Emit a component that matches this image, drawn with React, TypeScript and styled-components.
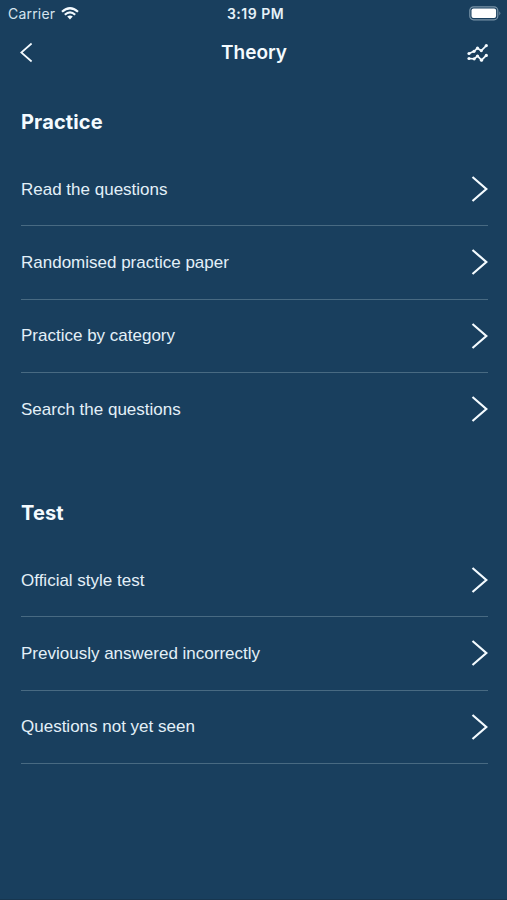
import React from "react";
import styled, { createGlobalStyle } from "styled-components";

const GlobalStyle = createGlobalStyle`
  * { box-sizing: border-box; }
  body { margin: 0; background: #193f5e; }
`;

const Screen = styled.div`
  display: flex;
  flex-direction: column;
  width: 507px;
  height: 900px;
  overflow: hidden;
  background: #193f5e;
  color: #f4fbff;
  font-family: "Liberation Sans", sans-serif;
  border-bottom: 1px solid #17364f;
`;

const StatusBar = styled.div`
  display: grid;
  grid-template-columns: 1fr auto 1fr;
  align-items: center;
  height: 27px;
  padding: 0 6px 0 8px;
  font-family: Inter, sans-serif;
`;

const Carrier = styled.div`
  display: flex;
  align-items: center;
  gap: 6px;
  font-size: 14px;
  letter-spacing: 0.2px;
  color: #d5e4ee;
`;

const Clock = styled.div`
  padding-left: 2px;
  font-size: 14px;
  font-weight: 600;
  letter-spacing: 0.5px;
  color: #e6f1f8;
`;

const BatterySlot = styled.div`
  display: flex;
  justify-content: flex-end;
`;

const NavBar = styled.header`
  display: grid;
  grid-template-columns: 1fr auto 1fr;
  align-items: center;
  height: 51px;
  padding: 0 18px 0 20px;
`;

const NavButton = styled.button<{ $end?: boolean }>`
  display: flex;
  justify-self: ${(p) => (p.$end ? "end" : "start")};
  padding: 0;
  border: 0;
  background: none;
  color: inherit;
`;

const Title = styled.h1`
  margin: 0;
  padding-right: 1px;
  font: 600 19px/24px Inter, sans-serif;
`;

const Section = styled.section`
  height: 391px;
  padding: 30px 19px 0 21px;
`;

const Heading = styled.h2`
  margin: 0 0 17px;
  font: 700 20px/28px Inter, sans-serif;
  letter-spacing: 0.15px;
`;

const List = styled.ul`
  margin: 0;
  padding: 0;
  list-style: none;
`;

const Row = styled.li<{ $line: boolean }>`
  display: flex;
  align-items: center;
  justify-content: space-between;
  height: 73.3px;
  border-bottom: 1px solid ${(p) => (p.$line ? "#486a82" : "transparent")};
`;

const Label = styled.span`
  padding-top: 1px;
  font-size: 17px;
  line-height: 22px;
  color: #e3f0f8;
`;

const WifiIcon = () => (
  <svg width="18" height="13" viewBox="0 0 18 13" fill="none" stroke="#f4fbff" strokeWidth="2.2">
    <path d="M1 4.8Q9-2.3 17 4.8M3.8 7.7Q9 3.1 14.2 7.7" />
    <path d="M6.2 9.6Q9 7.2 11.8 9.6L9 12.6Z" fill="#f4fbff" stroke="none" />
  </svg>
);

const BatteryIcon = () => (
  <svg width="32" height="15" viewBox="0 0 32 15" fill="none">
    <rect x="0.8" y="0.8" width="28" height="13" rx="3.8" stroke="#7994a8" strokeWidth="1.2" />
    <rect x="2.5" y="2.5" width="24.6" height="9.6" rx="2" fill="#fff" />
    <path d="M30.4 5.2Q32.2 7.3 30.4 9.4Z" fill="#7994a8" />
  </svg>
);

const BackIcon = () => (
  <svg width="13" height="21" viewBox="0 0 13 21" fill="none" stroke="currentColor" strokeWidth="1.7">
    <path d="M11.6 1.5L1.3 10.5L11.6 19.5" />
  </svg>
);

const StatsIcon = () => (
  <svg width="22" height="20" viewBox="0 0 22 20" fill="none" stroke="currentColor" strokeWidth="1.7">
    <path d="M2 10.5L7 8.3L10.5 5.2L14.3 7.6L19.3 2.6M2 15.5L7.2 15.8L10.5 13L14.5 17.2L19.3 12.4" />
    <g fill="currentColor" stroke="none">
      {[[2, 10.5], [7, 8.3], [10.5, 5.2], [14.3, 7.6], [19.3, 2.6], [2, 15.5], [7.2, 15.8], [10.5, 13], [14.5, 17.2], [19.3, 12.4]].map(
        ([x, y]) => <circle key={`${x}-${y}`} cx={x} cy={y} r="1.6" />
      )}
    </g>
  </svg>
);

const RowArrow = () => (
  <svg width="17" height="28" viewBox="0 0 17 28" fill="none" stroke="#f4fbff" strokeWidth="2.2">
    <path d="M1.5 2L15.3 14L1.5 26" />
  </svg>
);

const sections = [
  {
    title: "Practice",
    lastLine: false,
    rows: ["Read the questions", "Randomised practice paper", "Practice by category", "Search the questions"],
  },
  {
    title: "Test",
    lastLine: true,
    rows: ["Official style test", "Previously answered incorrectly", "Questions not yet seen"],
  },
];

export default function App() {
  return (
    <Screen>
      <GlobalStyle />
      <StatusBar>
        <Carrier>Carrier <WifiIcon /></Carrier>
        <Clock>3:19 PM</Clock>
        <BatterySlot><BatteryIcon /></BatterySlot>
      </StatusBar>
      <NavBar>
        <NavButton aria-label="Back"><BackIcon /></NavButton>
        <Title>Theory</Title>
        <NavButton $end aria-label="Statistics"><StatsIcon /></NavButton>
      </NavBar>
      {sections.map((section) => (
        <Section key={section.title}>
          <Heading>{section.title}</Heading>
          <List>
            {section.rows.map((row, i) => (
              <Row key={row} $line={section.lastLine || i < section.rows.length - 1}>
                <Label>{row}</Label>
                <RowArrow />
              </Row>
            ))}
          </List>
        </Section>
      ))}
    </Screen>
  );
}
